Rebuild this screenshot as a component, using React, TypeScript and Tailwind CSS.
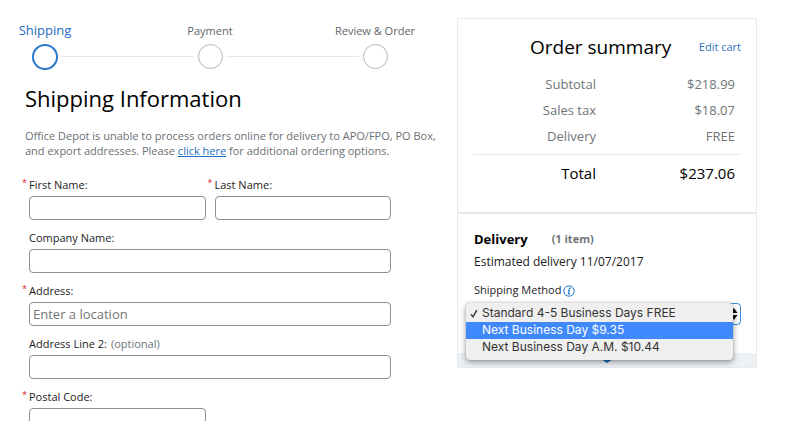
import { FunctionComponent, JSX, ReactNode, useState } from "react";
import clsx from "clsx";

type Step = {
  label: string;
  current?: boolean;
};

type FieldProps = {
  id: string;
  label: string;
  required?: boolean;
  optional?: boolean;
  placeholder?: string;
};

const steps: Step[] = [
  { label: "Shipping", current: true },
  { label: "Payment" },
  { label: "Review & Order" },
];

const totals: [string, string][] = [
  ["Subtotal", "$218.99"],
  ["Sales tax", "$18.07"],
  ["Delivery", "FREE"],
];

const methods: string[] = [
  "Standard 4-5 Business Days FREE",
  "Next Business Day $9.35",
  "Next Business Day A.M. $10.44",
];

const StepItem: FunctionComponent<Step> = ({ label, current }): JSX.Element => (
  <li
    className="flex w-20 shrink-0 flex-col items-center gap-[3px]"
    aria-current={current ? "step" : undefined}
  >
    <span
      className={clsx(
        "flex h-5 items-center whitespace-nowrap",
        current ? "text-[13px] text-[#1f6dc1]" : "text-[11px] text-[#5f666a]"
      )}
    >
      {label}
    </span>
    <span
      className={clsx(
        "rounded-full",
        current
          ? "size-[26px] border-2 border-[#2a78cc]"
          : "size-[25px] border border-[#b4b4b4]"
      )}
    />
  </li>
);

const Connector: FunctionComponent = (): JSX.Element => (
  <li aria-hidden="true" className="-mx-6 mt-[35px] h-px flex-1 bg-[#e8e8e8]" />
);

const Field: FunctionComponent<FieldProps> = ({
  id,
  label,
  required,
  optional,
  placeholder,
}): JSX.Element => (
  <div className="flex min-w-0 flex-1 flex-col gap-0.5">
    <label
      htmlFor={id}
      className="relative flex h-[18px] items-center gap-1 text-[11px] text-[#1c2224]"
    >
      {required && (
        <span className="absolute -left-[7px] top-0 text-[9px] text-[#e02020]">
          *
        </span>
      )}
      {label}
      {optional && <span className="text-[#6d7578]">(optional)</span>}
    </label>
    <input
      id={id}
      type="text"
      required={required}
      placeholder={placeholder}
      className="h-6 w-full rounded-sm border border-[#8b8f96] bg-white px-[3px] text-[13px] text-black outline-none placeholder:text-[#757575]"
    />
  </div>
);

const FieldRow: FunctionComponent<{ children: ReactNode }> = ({
  children,
}): JSX.Element => <div className="flex gap-[9px]">{children}</div>;

const InfoIcon: FunctionComponent = (): JSX.Element => (
  <svg viewBox="0 0 12 12" className="size-3" aria-hidden="true">
    <circle cx="6" cy="6" r="5.2" fill="none" stroke="#2478c8" strokeWidth="1" />
    <circle cx="6.7" cy="3.2" r="0.9" fill="#2478c8" />
    <path
      d="M4.9 5.2h1.5L5.5 8.9h1.4"
      fill="none"
      stroke="#2478c8"
      strokeWidth="1.2"
    />
  </svg>
);

const ShippingMethod: FunctionComponent = (): JSX.Element => {
  const [selected, setSelected] = useState<number>(0);
  const [active, setActive] = useState<number>(1);

  return (
    <div className="relative">
      <select
        id="method"
        value={selected}
        onChange={(e) => setSelected(Number(e.target.value))}
        className="block h-[22px] w-full appearance-none rounded-sm border border-[#3d8fdd] bg-white px-2 text-[13px] outline-none"
      >
        {methods.map((method, index) => (
          <option key={method} value={index}>
            {method}
          </option>
        ))}
      </select>
      <svg
        viewBox="0 0 8 14"
        className="pointer-events-none absolute right-[3px] top-1 h-3.5 w-2"
        aria-hidden="true"
      >
        <path d="M4 1L7.5 6H0.5zM4 13L0.5 8h7z" fill="#111" />
      </svg>
      <ul
        role="listbox"
        aria-label="Shipping Method"
        className="absolute -left-2 right-2 top-0 z-10 overflow-hidden rounded-sm bg-[#efefef] pt-0.5 pb-1 font-['Inter',sans-serif] text-xs text-[#333] shadow-[0_2px_6px_rgba(0,0,0,0.4),0_0_1px_rgba(0,0,0,0.4)]"
      >
        {methods.map((method, index) => (
          <li
            key={method}
            role="option"
            aria-selected={index === selected}
            onMouseEnter={() => setActive(index)}
            onClick={() => setSelected(index)}
            className={clsx(
              "flex h-[17px] cursor-default items-center whitespace-nowrap",
              index === active && "bg-[#3f89fc] text-white"
            )}
          >
            <span className="flex w-4 shrink-0 justify-center">
              {index === selected && (
                <svg viewBox="0 0 8 9" className="h-[9px] w-2" aria-hidden="true">
                  <path
                    d="M1 5.4L3 7.8L6.8 1.2"
                    fill="none"
                    stroke="currentColor"
                    strokeWidth="1.4"
                  />
                </svg>
              )}
            </span>
            {method}
          </li>
        ))}
      </ul>
    </div>
  );
};

const OrderSummary: FunctionComponent = (): JSX.Element => (
  <aside className="mt-[18px] w-[300px] shrink-0 self-start border border-[#e8eaeb]">
    <section className="border-b-2 border-[#e6e8ea] px-[15px] pt-[15px] pb-5">
      <div className="grid grid-cols-[1fr_auto] items-center">
        <h2 className="pl-[57px] text-[19px] leading-[26px] text-black">
          Order summary
        </h2>
        <a href="#cart" className="text-[11px] text-[#2f6fbf]">
          Edit cart
        </a>
      </div>
      <table className="mt-3 w-full border-collapse text-[13px] text-[#6d7578]">
        <tbody>
          {totals.map(([label, amount]) => (
            <tr key={label} className="h-[26px]">
              <th scope="row" className="w-[123px] text-right font-normal">
                {label}
              </th>
              <td className="pr-1.5 text-right">{amount}</td>
            </tr>
          ))}
        </tbody>
      </table>
      <table className="mt-1 w-full border-t border-[#e8eaeb] text-[15px] text-black">
        <tbody>
          <tr className="h-[37px]">
            <th scope="row" className="w-[123px] text-right font-normal">
              Total
            </th>
            <td className="pr-1.5 text-right">$237.06</td>
          </tr>
        </tbody>
      </table>
    </section>
    <section className="pt-4 pl-4 pr-[15px]">
      <div className="flex h-5 items-center gap-6">
        <h3 className="text-[13px] font-bold text-black">Delivery</h3>
        <span className="text-[11px] font-bold text-[#6d7578]">(1 item)</span>
      </div>
      <p className="mt-0.5 text-xs leading-5 text-[#1c1c1c]">
        Estimated delivery 11/07/2017
      </p>
      <div className="mt-[9px] flex h-5 items-center gap-0.5">
        <label htmlFor="method" className="text-[11px] text-[#1c2224]">
          Shipping Method
        </label>
        <InfoIcon />
      </div>
      <div className="mt-0.5 pb-7">
        <ShippingMethod />
      </div>
    </section>
    <button
      type="button"
      aria-label="Show items"
      className="flex h-3.5 w-full items-end justify-center bg-[#edf1f4] pb-1"
    >
      <svg viewBox="0 0 12 8" className="h-2 w-3" aria-hidden="true">
        <path d="M0 1l6 2.5L12 1v3L6 8L0 4z" fill="#1f6db8" />
      </svg>
    </button>
  </aside>
);

export default function App(): JSX.Element {
  return (
    <div className="flex min-h-screen w-full bg-white pr-[35px] font-['Open_Sans',sans-serif]">
      <main className="min-w-0 flex-1 pt-[21px] pb-4">
        <ol className="flex items-start pl-[5px] pr-[42px]">
          <StepItem {...steps[0]} />
          <Connector />
          <StepItem {...steps[1]} />
          <Connector />
          <StepItem {...steps[2]} />
        </ol>
        <div className="pl-[25px]">
          <h1 className="mt-3 text-[22px] leading-8 text-black">
            Shipping Information
          </h1>
          <p className="mt-3.5 pr-5 text-[11px] leading-[15px] text-[#6a7174]">
            Office Depot is unable to process orders online for delivery to
            APO/FPO, PO Box, and export addresses. Please{" "}
            <a href="#options" className="text-[#1f6dc1] underline">
              click here
            </a>{" "}
            for additional ordering options.
          </p>
        </div>
        <form className="mt-[18px] flex flex-col gap-[9px] pl-[29px] pr-[66px]">
          <FieldRow>
            <Field id="first" label="First Name:" required />
            <Field id="last" label="Last Name:" required />
          </FieldRow>
          <FieldRow>
            <Field id="company" label="Company Name:" />
          </FieldRow>
          <FieldRow>
            <Field
              id="address"
              label="Address:"
              required
              placeholder="Enter a location"
            />
          </FieldRow>
          <FieldRow>
            <Field id="address2" label="Address Line 2:" optional />
          </FieldRow>
          <FieldRow>
            <Field id="postal" label="Postal Code:" required />
            <div className="flex-1" />
          </FieldRow>
        </form>
      </main>
      <OrderSummary />
    </div>
  );
}
